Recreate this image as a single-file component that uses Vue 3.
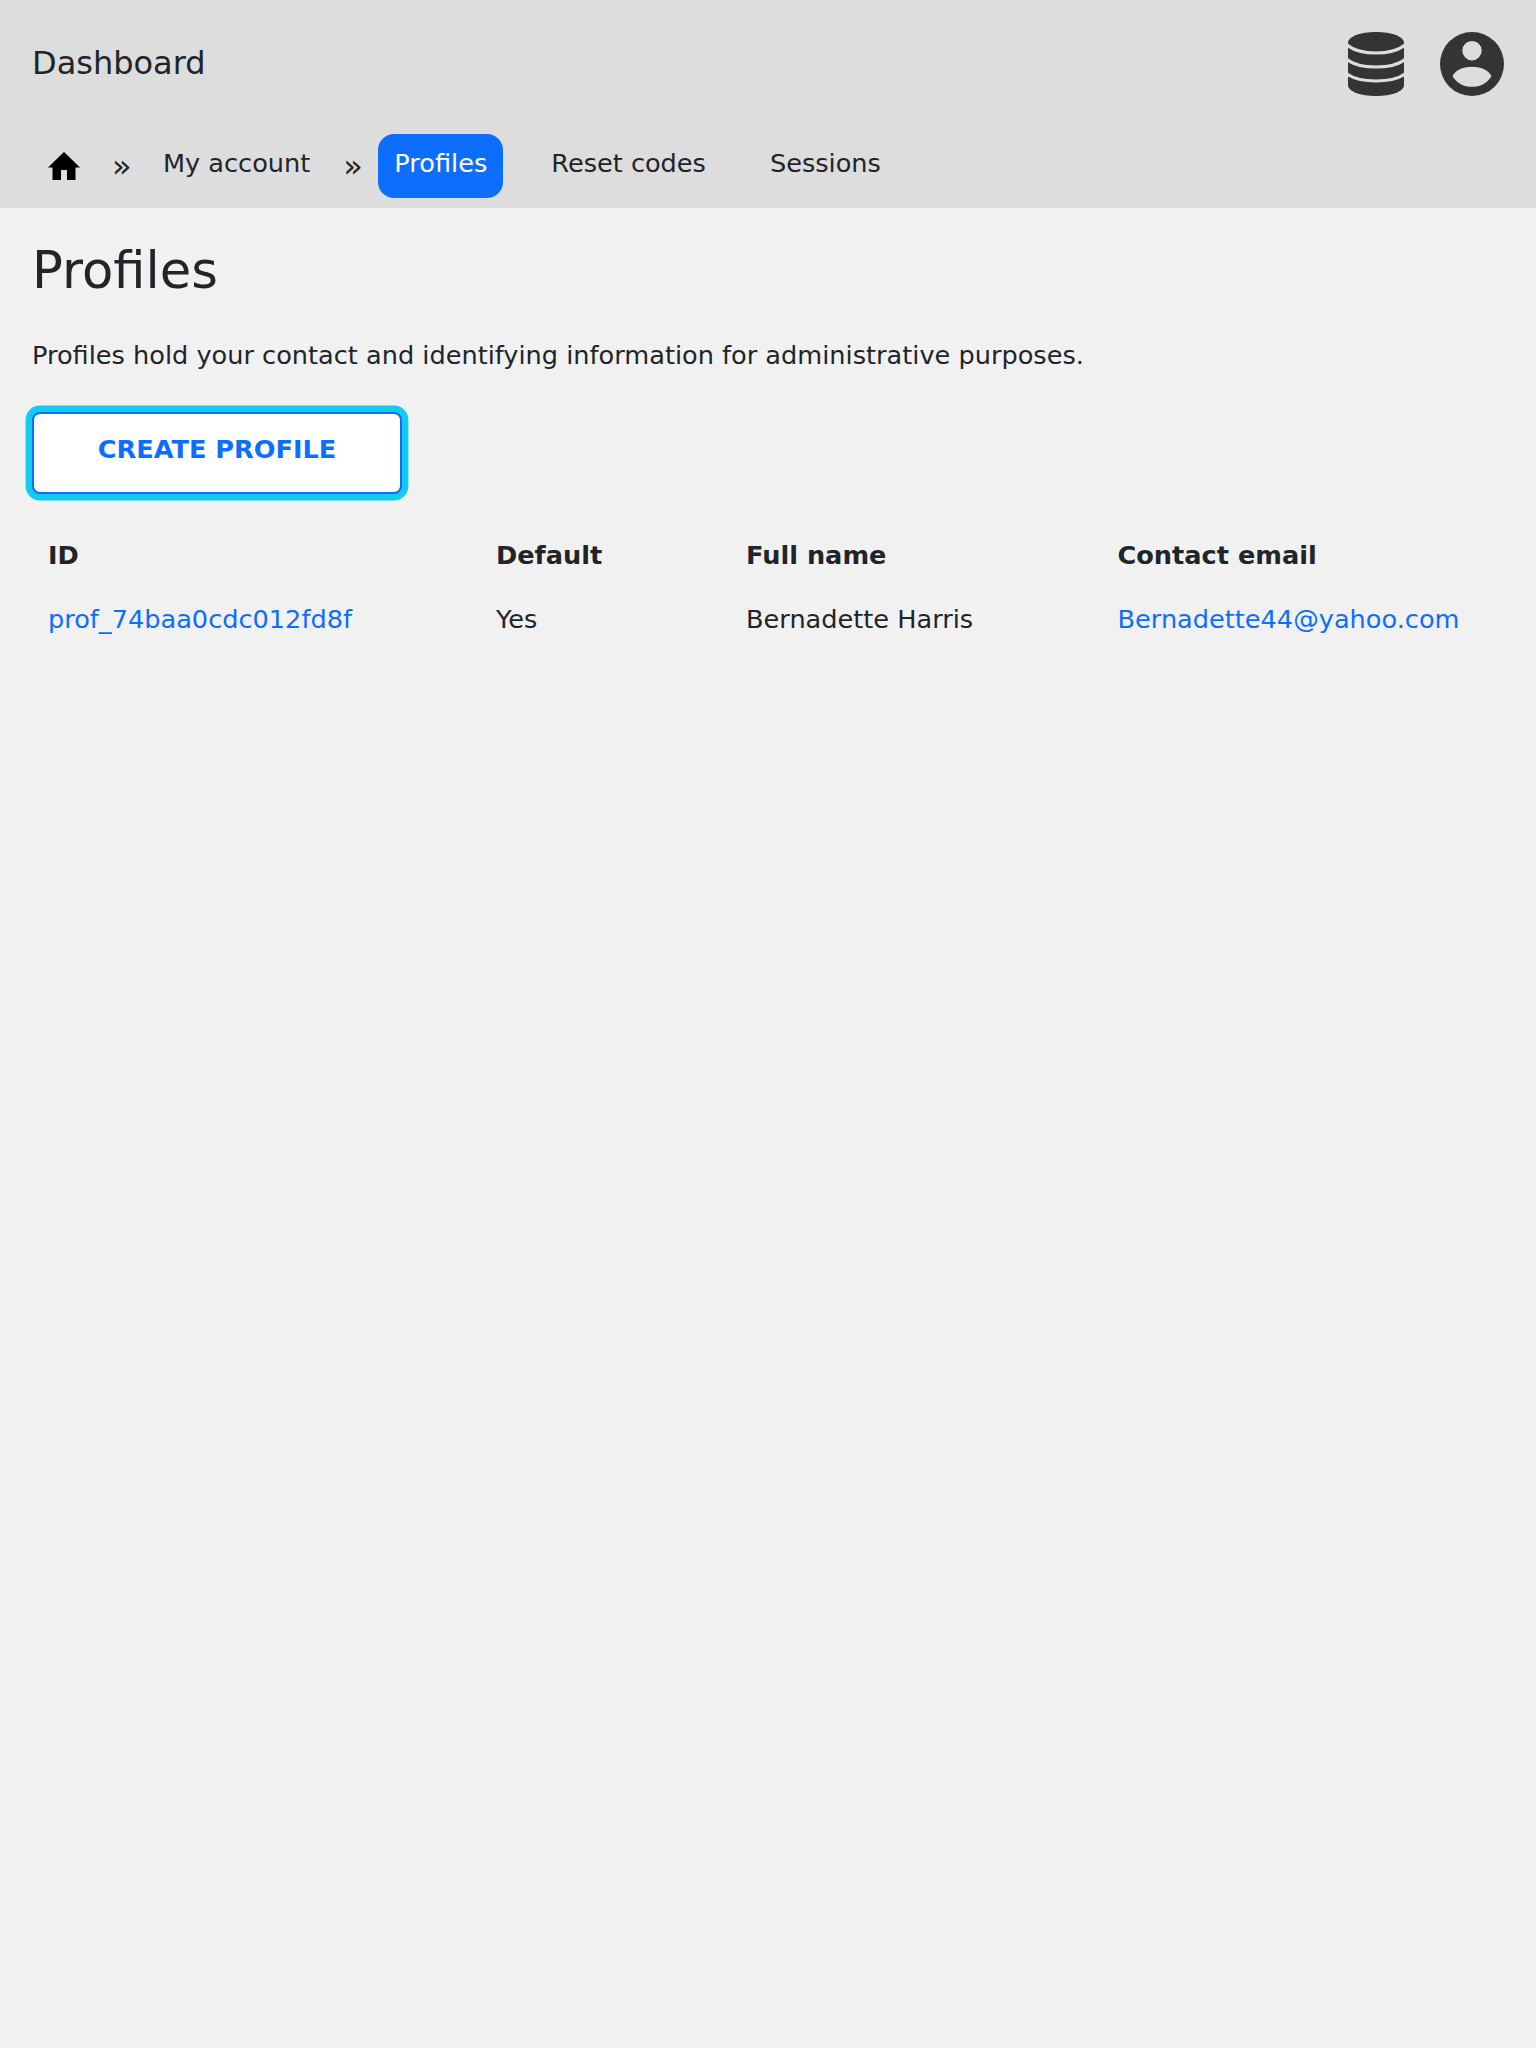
<template>
  <div class="page">
    <header class="top">
      <div class="top-row">
        <a class="brand">Dashboard</a>
        <div class="top-icons">
          <svg width="56" height="64" viewBox="0 0 56 64">
            <path fill="#343434" d="M0 11C0 4.500 12.500 0 28 0s28 4.500 28 11v42c0 6.500-12.500 11-28 11S0 59.500 0 53Z" />
            <path fill="none" stroke="#dddddd" stroke-width="3.200" d="M-1 13C5 18 16 21 28 21S51 18 57 13M-1 27.500C5 32.500 16 35 28 35S51 32.500 57 27.500M-1 42C5 46.500 16 49 28 49S51 46.500 57 42" />
          </svg>
          <svg width="64" height="64" viewBox="0 0 64 64">
            <path fill="#343434" fill-rule="evenodd" d="M32 0a32 32 0 1 1 0 64a32 32 0 1 1 0-64ZM32 9a9.700 9.700 0 1 0 0 19.400a9.700 9.700 0 1 0 0-19.400ZM32 34.700c-10 0-17 4-19.500 9.500C17 51.500 24 54.800 32 54.800s15-3.300 19.500-10.600C49 38.700 42 34.700 32 34.700Z" />
          </svg>
        </div>
      </div>
      <nav class="crumbs">
        <a class="home">
          <svg width="32" height="28" viewBox="0 0 32 28">
            <path fill="#000" d="M16 0 32 15.500h-4.500V28H19V18h-6v10H4.500V15.500H0Z" />
          </svg>
        </a>
        <span class="sep first">»</span>
        <a class="crumb">My account</a>
        <span class="sep">»</span>
        <a class="crumb active">Profiles</a>
        <a class="crumb tab">Reset codes</a>
        <a class="crumb tab">Sessions</a>
      </nav>
    </header>
    <main class="content">
      <h1>Profiles</h1>
      <p>Profiles hold your contact and identifying information for administrative purposes.</p>
      <button class="create">CREATE PROFILE</button>
      <table>
        <thead>
          <tr>
            <th v-for="c in columns" :key="c">{{ c }}</th>
          </tr>
        </thead>
        <tbody>
          <tr>
            <td><a>prof_74baa0cdc012fd8f</a></td>
            <td>Yes</td>
            <td>Bernadette Harris</td>
            <td><a>Bernadette44@yahoo.com</a></td>
          </tr>
        </tbody>
      </table>
    </main>
  </div>
</template>

<script setup>
const columns = ['ID', 'Default', 'Full name', 'Contact email'];
</script>

<style>
html, body {
  margin: 0;
  background: #f1f1f1;
}
</style>

<style scoped>
.page {
  min-height: 2048px;
  background: #f1f1f1;
  font-family: "DejaVu Sans", sans-serif;
  font-size: 25.6px;
  line-height: 1.5;
  color: #212529;
}

.top {
  background: #dddddd;
  height: 208px;
  box-sizing: border-box;
  padding: 32px 32px 0;
}

.top-row {
  display: flex;
  justify-content: space-between;
  align-items: center;
  height: 64px;
}

.brand {
  font-size: 32px;
  padding-bottom: 2px;
}

.top-icons {
  display: flex;
  align-items: center;
  gap: 36px;
}

.crumbs {
  display: flex;
  align-items: center;
  margin-top: 38px;
  height: 64px;
}

.home {
  display: flex;
  margin-left: 16px;
}

.sep {
  margin: -1px 0 0 17px;
  width: 18px;
  font-size: 32px;
  line-height: 1;
}

.sep.first {
  margin-left: 32px;
}

.crumb {
  padding: 0 16px;
  height: 64px;
  line-height: 58px;
  border-radius: 16px;
  box-sizing: border-box;
}

.sep + .crumb {
  margin-left: 17px;
}

.active {
  background: #0d6efd;
  color: #fff;
}

.tab {
  margin-left: 32px;
}

.content {
  padding: 32px;
}

h1 {
  margin: 0;
  font-size: 51.2px;
  font-weight: 400;
  line-height: 61.44px;
}

p {
  margin: 35px 0 0;
}

.create {
  display: block;
  margin-top: 37px;
  width: 370px;
  height: 82px;
  padding: 0 0 7px;
  background: #fff;
  border: 2px solid #0d6efd;
  border-radius: 8px;
  box-shadow: 0 0 0 6.4px #13caf0;
  color: #0d6efd;
  font: bold 25.6px "DejaVu Sans", sans-serif;
}

table {
  margin-top: 29px;
  border-collapse: collapse;
}

th, td {
  padding: 0 16px;
  height: 64px;
  text-align: left;
}

th:nth-child(1) { width: 416px; }
th:nth-child(2) { width: 218px; }
th:nth-child(3) { width: 339.5px; }

a {
  color: inherit;
}

td a {
  color: #0d6efd;
}
</style>
